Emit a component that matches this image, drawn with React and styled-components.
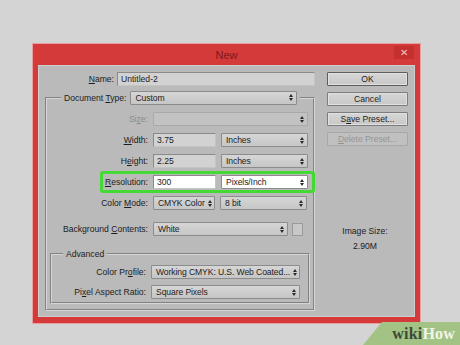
import React from "react";
import styled, { createGlobalStyle, css } from "styled-components";

const GlobalStyle = createGlobalStyle`
	html, body {
		margin: 0;
		padding: 0;
	}
	body {
		width: 460px;
		height: 345px;
		overflow: hidden;
		background: #d4d4d4;
		font-family: "Liberation Sans", Arial, sans-serif;
		color: #1c1c1c;
	}
`;

const Page = styled.div`
	position: relative;
	width: 460px;
	height: 345px;
	padding: 44px 0 0 33px;
	box-sizing: border-box;
`;

const Window = styled.div`
	width: 387px;
	height: 279px;
	box-sizing: border-box;
	display: flex;
	flex-direction: column;
	padding: 0 5px 6px;
	background: #d43a3a;
	box-shadow: 0 0 0 1px #e6a0a0;
`;

const TitleBar = styled.div`
	position: relative;
	flex: none;
	height: 21px;
	display: flex;
	align-items: center;
	justify-content: center;
	font-size: 11px;
	color: #801818;
`;

const CloseButton = styled.div`
	position: absolute;
	top: 2px;
	right: 1px;
	width: 20px;
	height: 13px;
	display: flex;
	align-items: center;
	justify-content: center;
	background: #c43030;
	color: #f2c4c4;
	font-size: 10px;
`;

const Client = styled.div`
	flex: 1;
	min-height: 0;
	overflow: hidden;
	display: flex;
	background: #bababa;
	box-shadow: inset 0 0 0 1px #cdcdcd;
	font-size: 8.6px;
`;

const LeftColumn = styled.div`
	width: 277px;
	display: flex;
	flex-direction: column;
`;

const RightColumn = styled.div`
	flex: 1;
	display: flex;
	flex-direction: column;
	padding: 7px 0 0 12px;
	gap: 6px;
`;

const Row = styled.div`
	position: relative;
	display: flex;
	align-items: center;
	height: 14px;
	gap: 5px;
	margin-top: ${(p) => p.$top || 0}px;

	${(p) =>
		p.$highlight &&
		css`
			&::after {
				content: "";
				position: absolute;
				left: 53px;
				right: -2px;
				top: -4px;
				bottom: -4px;
				border: 3px solid #44d934;
				border-radius: 3px;
				pointer-events: none;
			}
		`}
`;

const Label = styled.label`
	width: ${(p) => p.$width}px;
	flex: none;
	text-align: right;
	white-space: nowrap;
	color: ${(p) => (p.$disabled ? "#8c8c8c" : "#1c1c1c")};
`;

const Input = styled.div`
	width: ${(p) => p.$width}px;
	height: 14px;
	box-sizing: border-box;
	display: flex;
	align-items: center;
	padding-left: 3px;
	background: ${(p) => (p.$white ? "#ffffff" : "#d2d2d2")};
	border: 1px solid #8a8a8a;
	border-right-color: #c4c4c4;
	border-bottom-color: #c4c4c4;
`;

const SelectBox = styled.div`
	width: ${(p) => p.$width}px;
	height: 14px;
	flex: none;
	box-sizing: border-box;
	display: flex;
	align-items: center;
	justify-content: space-between;
	gap: 3px;
	padding: 0 3px 0 4px;
	border: 1px solid ${(p) => (p.$disabled ? "#a9a9a9" : "#8c8c8c")};
	border-radius: 1px;
	background: ${(p) =>
		p.$white
			? "#ffffff"
			: p.$disabled
			? "#c2c2c2"
			: "linear-gradient(#d6d6d6, #c6c6c6)"};
	white-space: nowrap;
	overflow: hidden;
	letter-spacing: -0.1px;
	color: ${(p) => (p.$disabled ? "#999" : "#1c1c1c")};
`;

const Swatch = styled.div`
	width: 11px;
	height: 13px;
	box-sizing: border-box;
	margin-left: -1px;
	border: 1px solid #9a9a9a;
	background: #c8c8c8;
`;

const Group = styled.fieldset`
	margin: ${(p) => p.$margin};
	padding: ${(p) => p.$padding};
	border: 2px groove #d6d6d6;
	display: flex;
	flex-direction: column;
	gap: ${(p) => p.$gap}px;
	min-width: 0;
`;

const Legend = styled.legend`
	margin-left: ${(p) => p.$indent}px;
	padding: 0 3px;
	display: flex;
	align-items: center;
	gap: 4px;
	height: ${(p) => p.$height}px;
`;

const Button = styled.div`
	width: 81px;
	height: 14px;
	box-sizing: border-box;
	display: flex;
	align-items: center;
	justify-content: center;
	border: 1px solid ${(p) => (p.$default ? "#5e5e5e" : "#7c7c7c")};
	border-radius: 1px;
	background: linear-gradient(#d6d6d6, #c8c8c8);
	box-shadow: inset 0 0 0 1px #e0e0e0;
	color: ${(p) => (p.$disabled ? "#959595" : "#1c1c1c")};
	${(p) =>
		p.$disabled &&
		css`
			border-color: #a8a8a8;
			background: #c0c0c0;
			box-shadow: none;
		`}
`;

const ImageSize = styled.div`
	margin-top: 74px;
	padding-right: 12px;
	display: flex;
	flex-direction: column;
	align-items: center;
	gap: 5px;
	line-height: 10px;
`;

const Watermark = styled.div`
	position: absolute;
	right: 0;
	bottom: 0;
	width: 97px;
	height: 23px;
	display: flex;
	align-items: center;
	justify-content: flex-end;
	padding-right: 5px;
	box-sizing: border-box;
	background: #a3c385;
	clip-path: polygon(19px 0, 100% 0, 100% 100%, 0 100%);
	font-family: "Liberation Serif", "Times New Roman", serif;
	font-weight: bold;
	font-size: 16px;
	letter-spacing: 0.2px;
`;

const Wiki = styled.span`
	color: #3c4a38;
`;

const How = styled.span`
	color: #f0f5ea;
`;

const Arrows = () => (
	<svg width="4" height="7" viewBox="0 0 4 7" style={{ flex: "none" }}>
		<path d="M0 3 L2 0 L4 3 Z M0 4 L4 4 L2 7 Z" fill="#2a2a2a" />
	</svg>
);

const Select = ({ value, width, white, disabled }) => (
	<SelectBox $width={width} $white={white} $disabled={disabled}>
		<span>{value}</span>
		<Arrows />
	</SelectBox>
);

export default function App() {
	return (
		<Page>
			<GlobalStyle />
			<Window>
				<TitleBar>
					New
					<CloseButton>✕</CloseButton>
				</TitleBar>
				<Client>
					<LeftColumn>
						<Row $top={7} style={{ gap: 3 }}>
							<Label $width={76}>
								<u>N</u>ame:
							</Label>
							<Input $width={198}>Untitled-2</Input>
						</Row>

						<Group $margin="5px 0 0 7px" $padding="8px 0 5px 0" $gap={7}>
							<Legend $indent={14} $height={13}>
								<span>
									Document <u>T</u>ype:
								</span>
								<Select value="Custom" width={167} />
							</Legend>

							<Row>
								<Label $width={101} $disabled>
									Si<u>z</u>e:
								</Label>
								<Select value="" width={155} disabled />
							</Row>
							<Row>
								<Label $width={101}>
									<u>W</u>idth:
								</Label>
								<Input $width={63}>3.75</Input>
								<Select value="Inches" width={87} />
							</Row>
							<Row>
								<Label $width={101}>
									H<u>e</u>ight:
								</Label>
								<Input $width={63}>2.25</Input>
								<Select value="Inches" width={87} />
							</Row>
							<Row $highlight>
								<Label $width={101}>
									<u>R</u>esolution:
								</Label>
								<Input $width={63} $white>
									300
								</Input>
								<Select value="Pixels/Inch" width={87} white />
							</Row>
							<Row>
								<Label $width={101}>
									Color <u>M</u>ode:
								</Label>
								<Select value="CMYK Color" width={62} />
								<Select value="8 bit" width={87} />
							</Row>
							<Row $top={5}>
								<Label $width={101}>
									Background <u>C</u>ontents:
								</Label>
								<Select value="White" width={135} />
								<Swatch />
							</Row>

							<Group $margin="5px 3px 0 3px" $padding="6px 0 3px 0" $gap={6}>
								<Legend $indent={11} $height={11}>
									Advanced
								</Legend>
								<Row>
									<Label $width={94}>
										Color Pr<u>o</u>file:
									</Label>
									<Select
										value="Working CMYK:  U.S. Web Coated..."
										width={149}
									/>
								</Row>
								<Row>
									<Label $width={94}>
										Pi<u>x</u>el Aspect Ratio:
									</Label>
									<Select value="Square Pixels" width={149} />
								</Row>
							</Group>
						</Group>
					</LeftColumn>

					<RightColumn>
						<Button $default>OK</Button>
						<Button>Cancel</Button>
						<Button>
							S<u>a</u>ve Preset...
						</Button>
						<Button $disabled>
							<u>D</u>elete Preset...
						</Button>
						<ImageSize>
							<span>Image Size:</span>
							<span>2.90M</span>
						</ImageSize>
					</RightColumn>
				</Client>
			</Window>
			<Watermark>
				<Wiki>wiki</Wiki>
				<How>How</How>
			</Watermark>
		</Page>
	);
}
